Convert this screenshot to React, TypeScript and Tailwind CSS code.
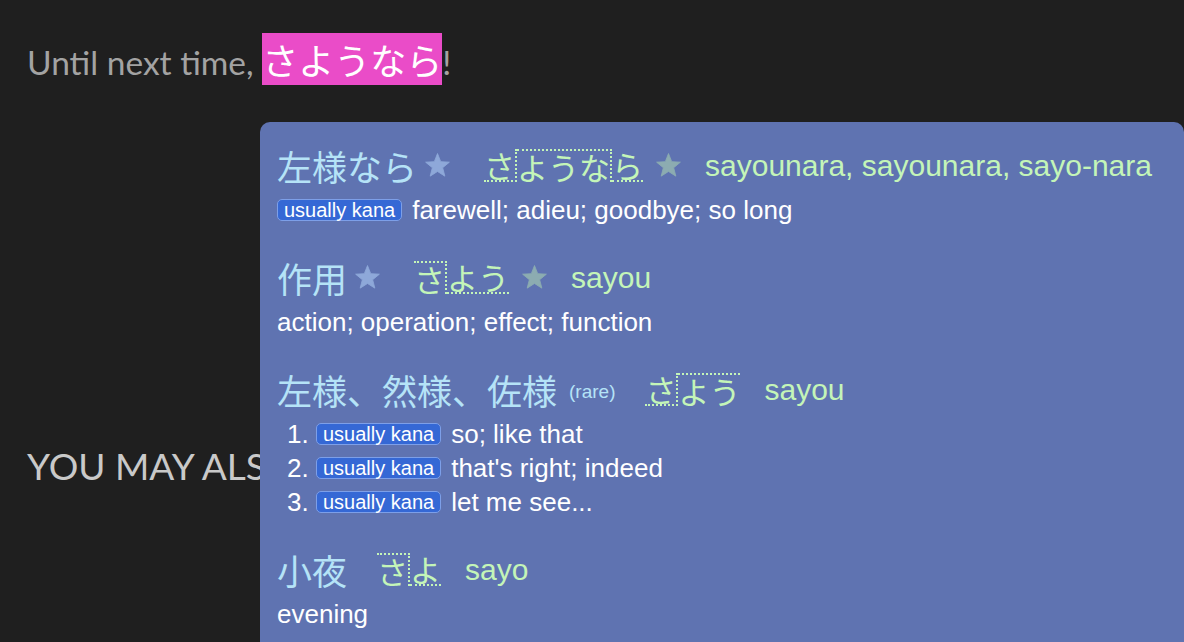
import React from 'react';

const jp = '"Noto Sans CJK JP", sans-serif';
const sans = '"Liberation Sans", Arial, sans-serif';

type Mora = { text: string; cls: string };

function Tag() {
  return (
    <span className="inline-flex items-center shrink-0 h-[22px] px-[6px] rounded-[5px] border-[1.5px] border-[#7d9fe8] bg-[#3568d5] text-white text-[20px] leading-none mr-[10px]">
      usually kana
    </span>
  );
}

function Star({ color }: { color: string }) {
  return (
    <svg width="25" height="24" viewBox="0 0 24 23" className="shrink-0 self-center">
      <path
        d="M12 0.5 L15.06 8.29 L23.41 8.79 L16.95 14.11 L19.05 22.21 L12 17.7 L4.95 22.21 L7.05 14.11 L0.59 8.79 L8.94 8.29 Z"
        fill={color}
        stroke={color}
        strokeWidth="0.8"
        strokeLinejoin="round"
      />
    </svg>
  );
}

function Reading({ morae }: { morae: Mora[] }) {
  return (
    <span className="text-[#c4f5b8] text-[31px] leading-none flex" style={{ fontFamily: jp }}>
      {morae.map((m, i) => (
        <span key={i} className={`border-[#c4f5b8] border-dotted ${m.cls}`}>
          {m.text}
        </span>
      ))}
    </span>
  );
}

function Headword({
  kanji,
  kanjiStar,
  rare,
  morae,
  kanaStar,
  romaji,
}: {
  kanji: string;
  kanjiStar?: boolean;
  rare?: boolean;
  morae: Mora[];
  kanaStar?: boolean;
  romaji: string;
}) {
  return (
    <div className="flex items-center h-[40px]">
      <span className="text-[#b5e3f7] text-[35px] leading-none" style={{ fontFamily: jp }}>
        {kanji}
      </span>
      {rare && <span className="text-[#b5e3f7] text-[19px] ml-[12px] self-end mb-[3px]">(rare)</span>}
      {kanjiStar && (
        <span className="ml-[8px] flex">
          <Star color="#8ea8d9" />
        </span>
      )}
      <span className={kanjiStar ? 'ml-[34px]' : 'ml-[30px]'}>
        <Reading morae={morae} />
      </span>
      {kanaStar && (
        <span className="ml-[13px] flex">
          <Star color="#8cacb1" />
        </span>
      )}
      <span className="text-[#c4f5b8] text-[30px] ml-[24px]">{romaji}</span>
    </div>
  );
}

function Sense({ n, text }: { n: number; text: string }) {
  return (
    <li className="flex items-center h-[34px]">
      <span className="w-[29px] shrink-0">{n}.</span>
      <Tag />
      <span>{text}</span>
    </li>
  );
}

const low = 'border-b-2';
const lowDrop = 'border-b-2 border-r-2';
const high = 'border-t-2';
const highDrop = 'border-t-2 border-r-2';

export default function App() {
  return (
    <div className="relative w-[1184px] h-[642px] overflow-hidden bg-[#1f1f1f]" style={{ fontFamily: sans }}>
      <div className="pl-[27px] pt-[33px]" style={{ fontFamily: '"Lato", "Noto Sans CJK JP", sans-serif' }}>
        <p className="text-[#a3a3a3] text-[33.5px] leading-[52px]">
          Until next time,{' '}
          <span className="bg-[#ea4cc8] text-white text-[36px]" style={{ fontFamily: jp }}>
            さようなら
          </span>
          !
        </p>
        <h2 className="mt-[356px] text-[#c9c9c9] text-[37px] leading-[44px]">YOU MAY ALSO LIKE</h2>
      </div>

      <div className="absolute left-[260px] top-[122px] w-[924px] h-[560px] rounded-[10px] bg-[#5f73b1] pl-[17px] pt-[23px] text-white">
        <Headword
          kanji="左様なら"
          kanjiStar
          morae={[
            { text: 'さ', cls: lowDrop },
            { text: 'ような', cls: highDrop },
            { text: 'ら', cls: low },
          ]}
          kanaStar
          romaji="sayounara, sayounara, sayo-nara"
        />
        <div className="mt-[8px] flex items-center h-[34px] text-[26px]">
          <Tag />
          <span>farewell; adieu; goodbye; so long</span>
        </div>

        <div className="mt-[30px]">
          <Headword
            kanji="作用"
            kanjiStar
            morae={[
              { text: 'さ', cls: highDrop },
              { text: 'よう', cls: low },
            ]}
            kanaStar
            romaji="sayou"
          />
          <div className="mt-[8px] text-[26px] leading-[34px]">action; operation; effect; function</div>
        </div>

        <div className="mt-[30px]">
          <Headword
            kanji="左様、然様、佐様"
            rare
            morae={[
              { text: 'さ', cls: lowDrop },
              { text: 'よう', cls: high },
            ]}
            romaji="sayou"
          />
          <ol className="mt-[8px] text-[26px] pl-[10px]">
            <Sense n={1} text="so; like that" />
            <Sense n={2} text="that's right; indeed" />
            <Sense n={3} text="let me see..." />
          </ol>
        </div>

        <div className="mt-[30px]">
          <Headword
            kanji="小夜"
            morae={[
              { text: 'さ', cls: highDrop },
              { text: 'よ', cls: low },
            ]}
            romaji="sayo"
          />
          <div className="mt-[8px] text-[26px] leading-[34px]">evening</div>
        </div>
      </div>
    </div>
  );
}
